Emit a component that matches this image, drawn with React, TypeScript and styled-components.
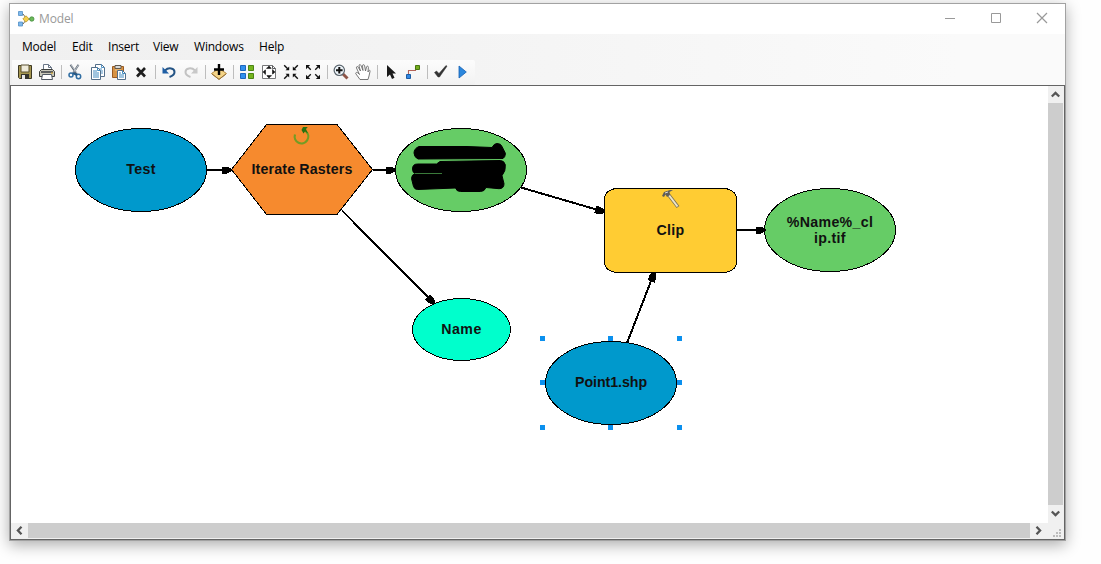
import React from 'react';
import styled, { createGlobalStyle } from 'styled-components';

const GlobalStyle = createGlobalStyle`
  html, body { margin: 0; background: #fff; overflow: hidden; }
  * { box-sizing: border-box; }
`;

const Desktop = styled.main`
  width: 1101px;
  height: 564px;
  padding: 3px 0 0 9px;
  overflow: hidden;
  background: #fefefe;
`;

const Window = styled.section`
  width: 1057px;
  height: 538px;
  display: flex;
  flex-direction: column;
  border: 1px solid #a2a2a2;
  background: #fff;
  box-shadow: 0 4px 14px rgba(0, 0, 0, 0.32);
`;

const TitleBar = styled.header`
  height: 30px;
  flex: none;
  display: flex;
  align-items: center;
  padding: 0 17px 0 8px;
  background: #fff;
`;

const Title = styled.h1`
  flex: 1;
  margin: 0 0 0 4px;
  font: 400 12px/16px 'Open Sans', 'Noto Sans', sans-serif;
  letter-spacing: -0.15px;
  color: #999;
`;

const WindowControls = styled.div`
  display: flex;
  gap: 34px;
  margin-bottom: 2px;
`;

const Chrome = styled.div`
  flex: none;
  height: 51px;
  background: linear-gradient(90deg, #f0f0f0 0%, #f1f1f1 20%, #fafafa 90%);
`;

const MenuBar = styled.nav`
  display: flex;
  gap: 16px;
  height: 26px;
  padding: 0 0 0 12px;
`;

const MenuItem = styled.span<{ $width: number }>`
  width: ${(p) => p.$width}px;
  font: 400 12px/26px 'Open Sans', 'Noto Sans', sans-serif;
  letter-spacing: -0.2px;
  white-space: nowrap;
  color: #000;
`;

const ToolBar = styled.div`
  display: flex;
  align-items: center;
  width: 463px;
  height: 25px;
  margin-left: 2px;
  padding: 0 0 2px 2px;
  border-radius: 0 2px 2px 0;
  background: linear-gradient(#fcfcfc, #f6f6f6 60%, #f1f1f1);
`;

const ToolButton = styled.span`
  display: flex;
  justify-content: center;
  width: 22px;
`;

const Separator = styled.i`
  width: 1px;
  height: 14px;
  margin: 0 2px 0 3px;
  background: #bdbdbd;
`;

const Workspace = styled.div`
  flex: 1;
  display: grid;
  grid-template-columns: 1037px 16px;
  grid-template-rows: 437px 16px;
  border: 1px solid #646464;
  background: #f0f0f0;
`;

const Canvas = styled.div`
  position: relative;
  overflow: hidden;
  background: #fff;
`;

const Layer = styled.svg`
  position: absolute;
  inset: 0;
`;

const ScrollBar = styled.div<{ $vertical?: boolean }>`
  display: flex;
  flex-direction: ${(p) => (p.$vertical ? 'column' : 'row')};
  padding: ${(p) => (p.$vertical ? '0 1px 0 0' : '0 0 1px 0')};
`;

const ScrollArrow = styled.span<{ $turn: number }>`
  display: grid;
  place-items: center;
  flex: 0 0 17px;
  svg { transform: rotate(${(p) => p.$turn}deg); }
`;

const ScrollThumb = styled.span<{ $length: number }>`
  flex: 0 0 ${(p) => p.$length}px;
  background: #cdcdcd;
`;

const Corner = styled.div`
  display: flex;
  justify-content: flex-end;
  align-items: flex-end;
  padding: 0 3px 2px 0;
`;

const NodeBox = styled.div<{ $x: number; $y: number; $w: number; $h: number }>`
  position: absolute;
  left: ${(p) => p.$x - 11}px;
  top: ${(p) => p.$y - 86}px;
  width: ${(p) => p.$w}px;
  height: ${(p) => p.$h}px;
  display: flex;
  align-items: center;
  justify-content: center;
`;

const NodeLabel = styled.span<{ $spacing: number; $lift: number }>`
  position: relative;
  padding-bottom: ${(p) => p.$lift * 2}px;
  text-align: center;
  white-space: pre-line;
  font: 700 14.2px/16px 'Liberation Sans', Arial, sans-serif;
  letter-spacing: ${(p) => p.$spacing}px;
  color: #111;
`;

const NodeBadge = styled.span`
  position: absolute;
  top: 1px;
  left: 0;
  right: 0;
  display: flex;
  justify-content: center;
`;

type NodeProps = {
  x: number; y: number; w: number; h: number; fill: string;
  shape?: 'ellipse' | 'hexagon' | 'box'; label?: string; spacing?: number; children?: React.ReactNode;
};

function Node({ x, y, w, h, fill, shape = 'ellipse', label, spacing = 0.17, children }: NodeProps) {
  const paint = { fill, stroke: '#000', strokeWidth: 1, shapeRendering: 'crispEdges' as const };
  return (
    <NodeBox $x={x} $y={y} $w={w} $h={h}>
      <Layer width={w} height={h}>
        {shape === 'ellipse' && <ellipse cx={w / 2} cy={h / 2} rx={(w - 1) / 2} ry={(h - 1) / 2} {...paint} />}
        {shape === 'box' && <rect x=".5" y=".5" width={w - 1} height={h - 1} rx="13" ry="10" {...paint} />}
        {shape === 'hexagon' && (
          <polygon points={`.5,${h / 2} 35.5,.5 ${w - 36},.5 ${w - 0.5},${h / 2} ${w - 36},${h - 0.5} 35.5,${h - 0.5}`} {...paint} />
        )}
      </Layer>
      {label && <NodeLabel $spacing={spacing} $lift={label.includes('\n') ? 0 : 1}>{label}</NodeLabel>}
      {children}
    </NodeBox>
  );
}

const links = [
  [207, 170, 231.5, 170],
  [373, 170, 395.5, 170],
  [521, 187.5, 605, 212],
  [342, 210.5, 435, 304],
  [737, 230, 765.5, 230],
  [627, 343, 654.5, 272],
];

function Connector({ from }: { from: number[] }) {
  const [x1, y1, x2, y2] = from;
  const angle = (Math.atan2(y2 - y1, x2 - x1) * 180) / Math.PI;
  return (
    <g>
      <line x1={x1} y1={y1} x2={x2 - (x2 - x1) * 0.05} y2={y2 - (y2 - y1) * 0.05} stroke="#000" strokeWidth="2" />
      <path d="M-10-3.5h5L0-1v2l-5 3h-5z" transform={`translate(${x2} ${y2}) rotate(${angle})`} />
    </g>
  );
}

const Icon = ({ children }: { children: React.ReactNode }) => (
  <ToolButton><svg width="16" height="16" viewBox="0 0 16 16" fill="none">{children}</svg></ToolButton>
);

const SaveIcon = () => (
  <Icon>
    <path d="M1.5 1.5h13v13h-12l-1-1z" fill="#a59650" stroke="#3d3823" />
    <path d="M4 1h8v7H4z" fill="#eeeada" stroke="#5a5130" />
    <path d="M4 10h8v5H4z" fill="#34342f" /><path d="M5 11h3v4H5z" fill="#e8e8e8" />
  </Icon>
);
const PrintIcon = () => (
  <Icon>
    <path d="M4.5 7V.5h5l3 3V7" fill="#fff" stroke="#6b7788" /><path d="M9.5.5v3h3" stroke="#6b7788" />
    <path d="M2.5 5.5h11l2 2v5H.5v-5z" fill="#c9c8b9" stroke="#3e403e" />
    <path d="M2 8h12" stroke="#383d42" strokeWidth="1.5" />
    <path d="M3.5 10.5h9l1 5h-11z" fill="#fff" stroke="#505862" /><path d="M12 9h2" stroke="#e2ac24" />
  </Icon>
);
const CutIcon = () => (
  <Icon>
    <path d="M3.5.8 9.8 10M11.5.8 5.5 10" stroke="#626c77" strokeWidth="2" />
    <path d="m4 1 6 8M11.5 1 6 9" stroke="#dce3e9" strokeWidth=".7" />
    <circle cx="4" cy="11" r="2" stroke="#2f6da2" strokeWidth="1.5" />
    <circle cx="11.5" cy="12.5" r="2.2" stroke="#2f6da2" strokeWidth="1.5" />
    <path d="m6 9 4 2" stroke="#245887" strokeWidth="2" />
  </Icon>
);
const CopyIcon = () => (
  <Icon>
    <path d="M6.5.5h6l3 3v9h-9z" fill="#fff" stroke="#536e89" /><path d="M12.5.5v3h3M9 5h4M12 7h2M12 9h2" stroke="#5594c5" />
    <path d="M2.5 3.5h6l3 3v9h-9z" fill="#fff" stroke="#536e89" /><path d="M8.5 3.5v3h3M4 7h4M4 9h6M4 11h6M4 13h6" stroke="#408abf" />
  </Icon>
);
const PasteIcon = () => (
  <Icon>
    <path d="M1.5 2.5h11v11h-11z" fill="#d79345" stroke="#9a5a22" /><path d="M4 1.5h6v3H4z" fill="#d8d9d7" stroke="#60584d" />
    <path d="M4 6h6" stroke="#f4cf92" /><path d="M6.5 6.5h5l3 3v6h-8z" fill="#fff" stroke="#536e89" />
    <path d="M11.5 6.5v3h3M8 9h2M8 11h5M8 13h5" stroke="#408abf" />
  </Icon>
);
const DeleteIcon = () => <Icon><path d="m4 4 8 8.5M12 4l-8 8.5" stroke="#1e1e1e" strokeWidth="2.6" /></Icon>;
const UndoIcon = () => (
  <Icon>
    <path d="M4 6.5C7.5 3 13.5 4 13.5 8c0 2-2 4-5 5" stroke="#245485" strokeWidth="2" />
    <path d="M1.5 3v6.5H8z" fill="#1f5fa5" />
  </Icon>
);
const RedoIcon = () => (
  <Icon>
    <path d="M12 6.5C8.5 3 2.5 4 2.5 8c0 2 2 4 5 5" stroke="#c2c2c2" strokeWidth="2" />
    <path d="M14.5 3v6.5H8z" fill="#c8c8c8" />
  </Icon>
);
const AddDataIcon = () => (
  <Icon>
    <path d="m8 4.5 7.500 5L8 15.500.5 9.500z" fill="#f4d487" stroke="#b58b42" /><path d="m1 10 7 5.300 7-5.300" stroke="#95713a" />
    <path d="M8 0v11M3 5.500h10" stroke="#000" strokeWidth="2.4" />
  </Icon>
);
const LayoutIcon = () => (
  <Icon>
    <path d="M1.500 1.500h5v5h-5zM1.500 9.500h5v5h-5z" fill="#3090ee" stroke="#1d66bc" />
    <path d="M9.500 1.500h5v5h-5zM9.500 9.500h5v5h-5z" fill="#75b51f" stroke="#4b8415" />
  </Icon>
);
const FullExtentIcon = () => (
  <Icon>
    <path d="M1.500 1.500h10l3 3v10h-13z" fill="#fff" stroke="#77787a" /><path d="M11.500 1.500v3h3" stroke="#58595b" />
    <circle cx="8" cy="8" r="4.500" stroke="#777" strokeDasharray="2 1.500" />
    <path d="m8 1.500 2.600 3.300H5.400zM8 14.500l2.600-3.300H5.400zM1.500 8l3.300-2.600v5.200zM14.500 8l-3.300-2.600v5.200z" fill="#161616" />
  </Icon>
);

const quarters = [0, 90, 180, 270];

const ZoomInFixedIcon = () => (
  <Icon>
    {quarters.map((a) => (
      <g key={a} transform={`rotate(${a} 8 8)`}>
        <path d="M6.200 6.200V2.500L2.500 6.200z" fill="#111" /><path d="m1.200 1.200 3.500 3.500" stroke="#111" strokeWidth="1.4" />
      </g>
    ))}
  </Icon>
);
const ZoomOutFixedIcon = () => (
  <Icon>
    {quarters.map((a) => (
      <g key={a} transform={`rotate(${a} 8 8)`}>
        <path d="M1 1h4.200L1 5.200z" fill="#111" /><path d="m3 3 2.800 2.800" stroke="#111" strokeWidth="1.3" />
      </g>
    ))}
  </Icon>
);
const ZoomIcon = () => (
  <Icon>
    <path d="m10 10 4.500 4.500" stroke="#8e5548" strokeWidth="3" />
    <circle cx="6.300" cy="6.300" r="5.200" fill="#eef5fa" stroke="#59636b" strokeWidth="1.2" />
    <path d="M6.300 3v6.600M3 6.300h6.600" stroke="#111" strokeWidth="2" />
  </Icon>
);
const PanIcon = () => (
  <Icon><path d="M5 15.500 1 10C0 8.500 2 8 3 9l1.500 1.500L1.500 4c-.5-1.500 1-2 1.700-.8L5.500 7 4 2c-.3-1.500 1.500-2 2-.5L8 6.500 7.500 1.800C7.500.3 9.300.3 9.600 1.800L10.500 7l1-4c.4-1.400 2-1 1.900.4L13 8c1-2.500 2.300-2 2-.5L14 12l-1 3.500z" fill="#fff" stroke="#696969" strokeWidth=".9" /></Icon>
);
const SelectIcon = () => <Icon><path d="M4 1v12l3-2.600 2 4.600 2.500-1.200-2-4.400H13z" fill="#191919" /></Icon>;
const ConnectIcon = () => (
  <Icon>
    <path d="M3.500 10V6.500h7V4" stroke="#b56459" strokeWidth="1.1" />
    <path d="M1.500 10.500h4v4h-4z" fill="#3188e3" stroke="#1d5ca3" /><path d="M10.500 1.500h4v4h-4z" fill="#76ac1e" stroke="#47770f" />
  </Icon>
);
const ValidateIcon = () => <Icon><path d="M1.500 8.500 3.500 7l2.500 2.500 7-8 1 .7L6.500 13H5z" fill="#333" stroke="#333" strokeWidth=".5" /></Icon>;
const RunIcon = () => <Icon><path d="M4 2v12l7.300-6z" fill="#2b87dd" stroke="#1660b2" strokeWidth=".8" /></Icon>;

const tools = [
  SaveIcon, PrintIcon, null, CutIcon, CopyIcon, PasteIcon, DeleteIcon, null, UndoIcon, RedoIcon, null, AddDataIcon, null,
  LayoutIcon, FullExtentIcon, ZoomInFixedIcon, ZoomOutFixedIcon, null, ZoomIcon, PanIcon, null, SelectIcon, ConnectIcon,
  null, ValidateIcon, RunIcon,
];

const menus: [string, number][] = [
  ['Model', 34], ['Edit', 20], ['Insert', 29], ['View', 25], ['Windows', 49], ['Help', 26],
];

const Chevron = () => <svg width="9" height="7" viewBox="0 0 9 7"><path d="M.8 5.500 4.500 1.900l3.700 3.600" fill="none" stroke="#555" strokeWidth="2.3" /></svg>;

const handles = [[542.5, 338.5], [610.5, 338.5], [679.5, 338.5], [542.5, 382.5], [679.5, 382.5], [542.5, 427.5], [610.5, 427.5], [679.5, 427.5]];

export default function App() {
  return (
    <Desktop>
      <GlobalStyle />
      <Window>
        <TitleBar>
          <svg width="17" height="16" viewBox="0 0 17 16">
            <path d="M3 3h2l3 4M3 13h2l3-4M10 8h3" fill="none" stroke="#6d6755" />
            <path d="M.5.500h4v4h-4zM.5 11h4v4h-4z" fill="#7eb8ec" stroke="#528fc6" strokeWidth=".8" />
            <path d="m8 4.800 3.200 3.200L8 11.200 4.800 8z" fill="#f4cf4b" stroke="#b8942a" strokeWidth=".8" />
            <circle cx="13.800" cy="8" r="2.200" fill="#6cba59" stroke="#438a3c" strokeWidth=".8" />
          </svg>
          <Title>Model</Title>
          <WindowControls>
            <svg width="12" height="12"><path d="M1 6.500h10" stroke="#999" /></svg>
            <svg width="12" height="12"><path d="M1.500 1.500h9v9h-9z" fill="none" stroke="#999" /></svg>
            <svg width="12" height="12"><path d="m1 1 10 10M11 1 1 11" stroke="#999" strokeWidth="1.2" /></svg>
          </WindowControls>
        </TitleBar>
        <Chrome>
          <MenuBar>{menus.map(([text, width]) => <MenuItem key={text} $width={width}>{text}</MenuItem>)}</MenuBar>
          <ToolBar>{tools.map((Tool, i) => (Tool ? <Tool key={i} /> : <Separator key={i} />))}</ToolBar>
        </Chrome>
        <Workspace>
          <Canvas>
            <Node x={75} y={128} w={132} h={84} fill="#0099cc" label="Test" spacing={0.4} />
            <Node x={231} y={124} w={142} h={91} fill="#f68a2e" shape="hexagon" label="Iterate Rasters">
              <NodeBadge>
                <svg width="18" height="20" viewBox="0 0 18 20">
                  <path d="M2 9.500A6.800 6.800 0 1 0 13 6.500" fill="none" stroke="#739c24" strokeWidth="2.2" />
                  <path d="M8.500 5 10 2h4.800l-1.800 2 2 4.500-3-2-1.500 2z" fill="#26710f" />
                </svg>
              </NodeBadge>
            </Node>
            <Node x={395} y={128} w={132} h={84} fill="#66cc66">
              <Layer width="132" height="84" fill="#000" stroke="#000" strokeWidth="1" strokeLinejoin="round">
                <path d="M24 18.500q-5 2-5 6.500 0 4 4 6L108 30.500q2-1 2.500-5l-3.500-7q-1-3-5-3-3 0-5 4L72 18.500z" />
                <path d="M22.500 36q-5 0-5 5 0 4 3 4.500-4 1-4 5l2 8q1 3 4 3l38-1.500q1 3.500 5 3.500h20q4 0 5.500-4l13 1.200q5 0 5-5l-2-8q4-5 3.300-11-1-4-5-4.200L45 33.500 41.500 36z" />
                <path d="M20 45.500h27" stroke="#3a7a3a" />
              </Layer>
            </Node>
            <Node x={604} y={188} w={133} h={85} fill="#ffcc33" shape="box" label="Clip" spacing={0.3}>
              <NodeBadge>
                <svg width="19" height="20" viewBox="0 0 19 20">
                  <path d="m7 5 10 13" stroke="#776e56" strokeWidth="3.5" /><path d="m7 5 9.500 12.500" stroke="#eee6c9" strokeWidth="2" />
                  <path d="M1 7 3 3l6-2h3L8.500 3 9 6 6 8 4.500 5.500 3 8z" fill="#615e59" /><path d="m4 4 3-1" stroke="#ddd" />
                </svg>
              </NodeBadge>
            </Node>
            <Node x={764} y={188} w={132} h={84} fill="#66cc66" label={'%Name%_cl\nip.tif'} spacing={0.3} />
            <Node x={412} y={298} w={99} h={63} fill="#00ffcc" label="Name" spacing={0.5} />
            <Node x={545} y={341} w={132} h={84} fill="#0099cc" label="Point1.shp" spacing={-0.05} />
            <Layer width="1037" height="437" viewBox="11 86 1037 437" shapeRendering="crispEdges">
              {links.map((l, i) => <Connector key={i} from={l} />)}
              {handles.map(([x, y], i) => <rect key={i} x={x - 2.5} y={y - 2.5} width="5" height="5" fill="#0b90ee" />)}
            </Layer>
          </Canvas>
          <ScrollBar $vertical>
            <ScrollArrow $turn={0}><Chevron /></ScrollArrow><ScrollThumb $length={402} /><ScrollArrow $turn={180}><Chevron /></ScrollArrow>
          </ScrollBar>
          <ScrollBar>
            <ScrollArrow $turn={270}><Chevron /></ScrollArrow><ScrollThumb $length={1002} /><ScrollArrow $turn={90}><Chevron /></ScrollArrow>
          </ScrollBar>
          <Corner>
            <svg width="8" height="8" fill="#bcbcbc"><path d="M6 0h2v2H6zM6 3h2v2H6zM6 6h2v2H6zM3 3h2v2H3zM3 6h2v2H3zM0 6h2v2H0z" /></svg>
          </Corner>
        </Workspace>
      </Window>
    </Desktop>
  );
}
